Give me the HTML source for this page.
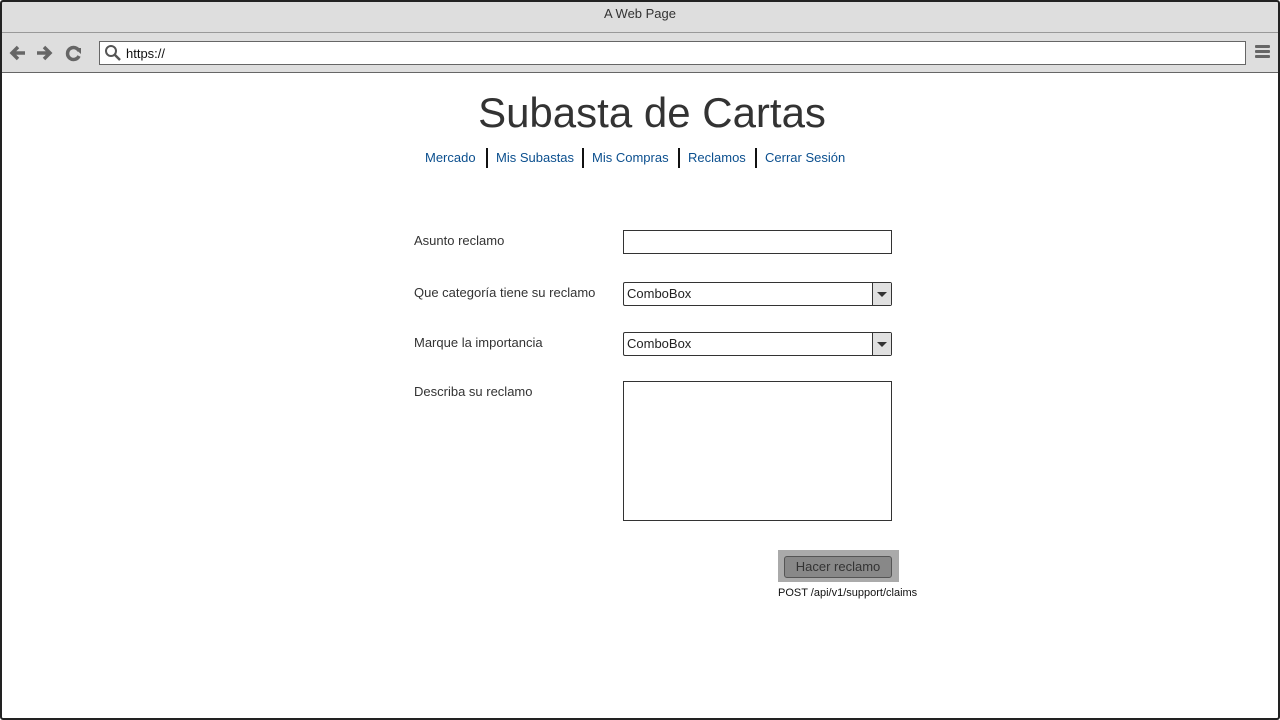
<!DOCTYPE html>
<html><head><style>
body{margin:0;width:1280px;height:720px;position:relative;font-family:"Liberation Sans",sans-serif;background:#fff;overflow:hidden}
.a{position:absolute}
.frame{left:0;top:0;width:1276px;height:716px;border:2px solid #222;border-radius:3px}
.t{font-size:13px;color:#333}
.nav{top:150px;font-size:13px;color:#0b4f8e}
.sep{width:2px;height:20px;background:#111;top:148px}
.box{border:1px solid #333;background:#fff}
.cb{font-size:13px;color:#222;padding:3px 0 0 3px;box-sizing:border-box;height:24px;width:269px;border-radius:2px}
.arr{right:0;top:0;width:18px;height:22px;background:#e0e0e0;border-left:1px solid #333}
</style></head><body>
<div class="a" style="left:2px;top:2px;width:1276px;height:30px;background:#dedede;border-bottom:1px solid #999"></div>
<div class="a t" style="left:0;width:1280px;top:6px;text-align:center">A Web Page</div>
<div class="a" style="left:2px;top:33px;width:1276px;height:39px;background:#dedede;border-bottom:1px solid #666"></div>
<svg class="a" style="left:8px;top:43px" width="80" height="20" viewBox="0 0 80 20">
<path d="M17 10H5M10 4L4 10l6 6" stroke="#666" stroke-width="3.5" fill="none"/>
<path d="M29 10h12M36 4l6 6-6 6" stroke="#666" stroke-width="3.5" fill="none"/>
<path d="M71 8a6 6 0 1 0 0 5" stroke="#666" stroke-width="3.5" fill="none"/><path d="M66 5l7 0 0 6z" fill="#666"/>
</svg>
<div class="a" style="left:99px;top:41px;width:1145px;height:22px;background:#fff;border:1px solid #666"></div>
<svg class="a" style="left:104px;top:44px" width="18" height="18"><circle cx="7" cy="7" r="5" stroke="#555" stroke-width="2" fill="none"/><path d="M11 11l5 5" stroke="#555" stroke-width="2.5"/></svg>
<div class="a t" style="left:126px;top:46px;color:#111">https://</div>
<div class="a" style="left:1255px;top:45px;width:15px;height:3px;background:#666;box-shadow:0 5px 0 #666,0 10px 0 #666;border-radius:1px"></div>
<div class="a" style="left:0;width:1304px;top:89px;text-align:center;font-size:42px;color:#333">Subasta de Cartas</div>
<div class="a nav" style="left:425px">Mercado</div>
<div class="a sep" style="left:486px"></div>
<div class="a nav" style="left:496px">Mis Subastas</div>
<div class="a sep" style="left:582px"></div>
<div class="a nav" style="left:592px">Mis Compras</div>
<div class="a sep" style="left:678px"></div>
<div class="a nav" style="left:688px">Reclamos</div>
<div class="a sep" style="left:755px"></div>
<div class="a nav" style="left:765px">Cerrar Sesión</div>
<div class="a t" style="left:414px;top:233px">Asunto reclamo</div>
<div class="a box" style="left:623px;top:230px;width:267px;height:22px"></div>
<div class="a t" style="left:414px;top:285px">Que categoría tiene su reclamo</div>
<div class="a box cb" style="left:623px;top:282px">ComboBox<div class="a arr"><svg width="18" height="22"><path d="M4 9h10l-5 5z" fill="#333"/></svg></div></div>
<div class="a t" style="left:414px;top:335px">Marque la importancia</div>
<div class="a box cb" style="left:623px;top:332px">ComboBox<div class="a arr"><svg width="18" height="22"><path d="M4 9h10l-5 5z" fill="#333"/></svg></div></div>
<div class="a t" style="left:414px;top:384px">Describa su reclamo</div>
<div class="a box" style="left:623px;top:381px;width:267px;height:138px"></div>
<div class="a" style="left:778px;top:550px;width:121px;height:32px;background:#aaa"></div>
<div class="a" style="left:784px;top:556px;width:106px;height:20px;background:#888;border:1px solid #555;border-radius:3px;font-size:13px;color:#333;text-align:center;line-height:20px">Hacer reclamo</div>
<div class="a" style="left:778px;top:587px;font-size:11px;color:#111">POST /api/v1/support/claims</div>
<div class="a frame"></div>
</body></html>
